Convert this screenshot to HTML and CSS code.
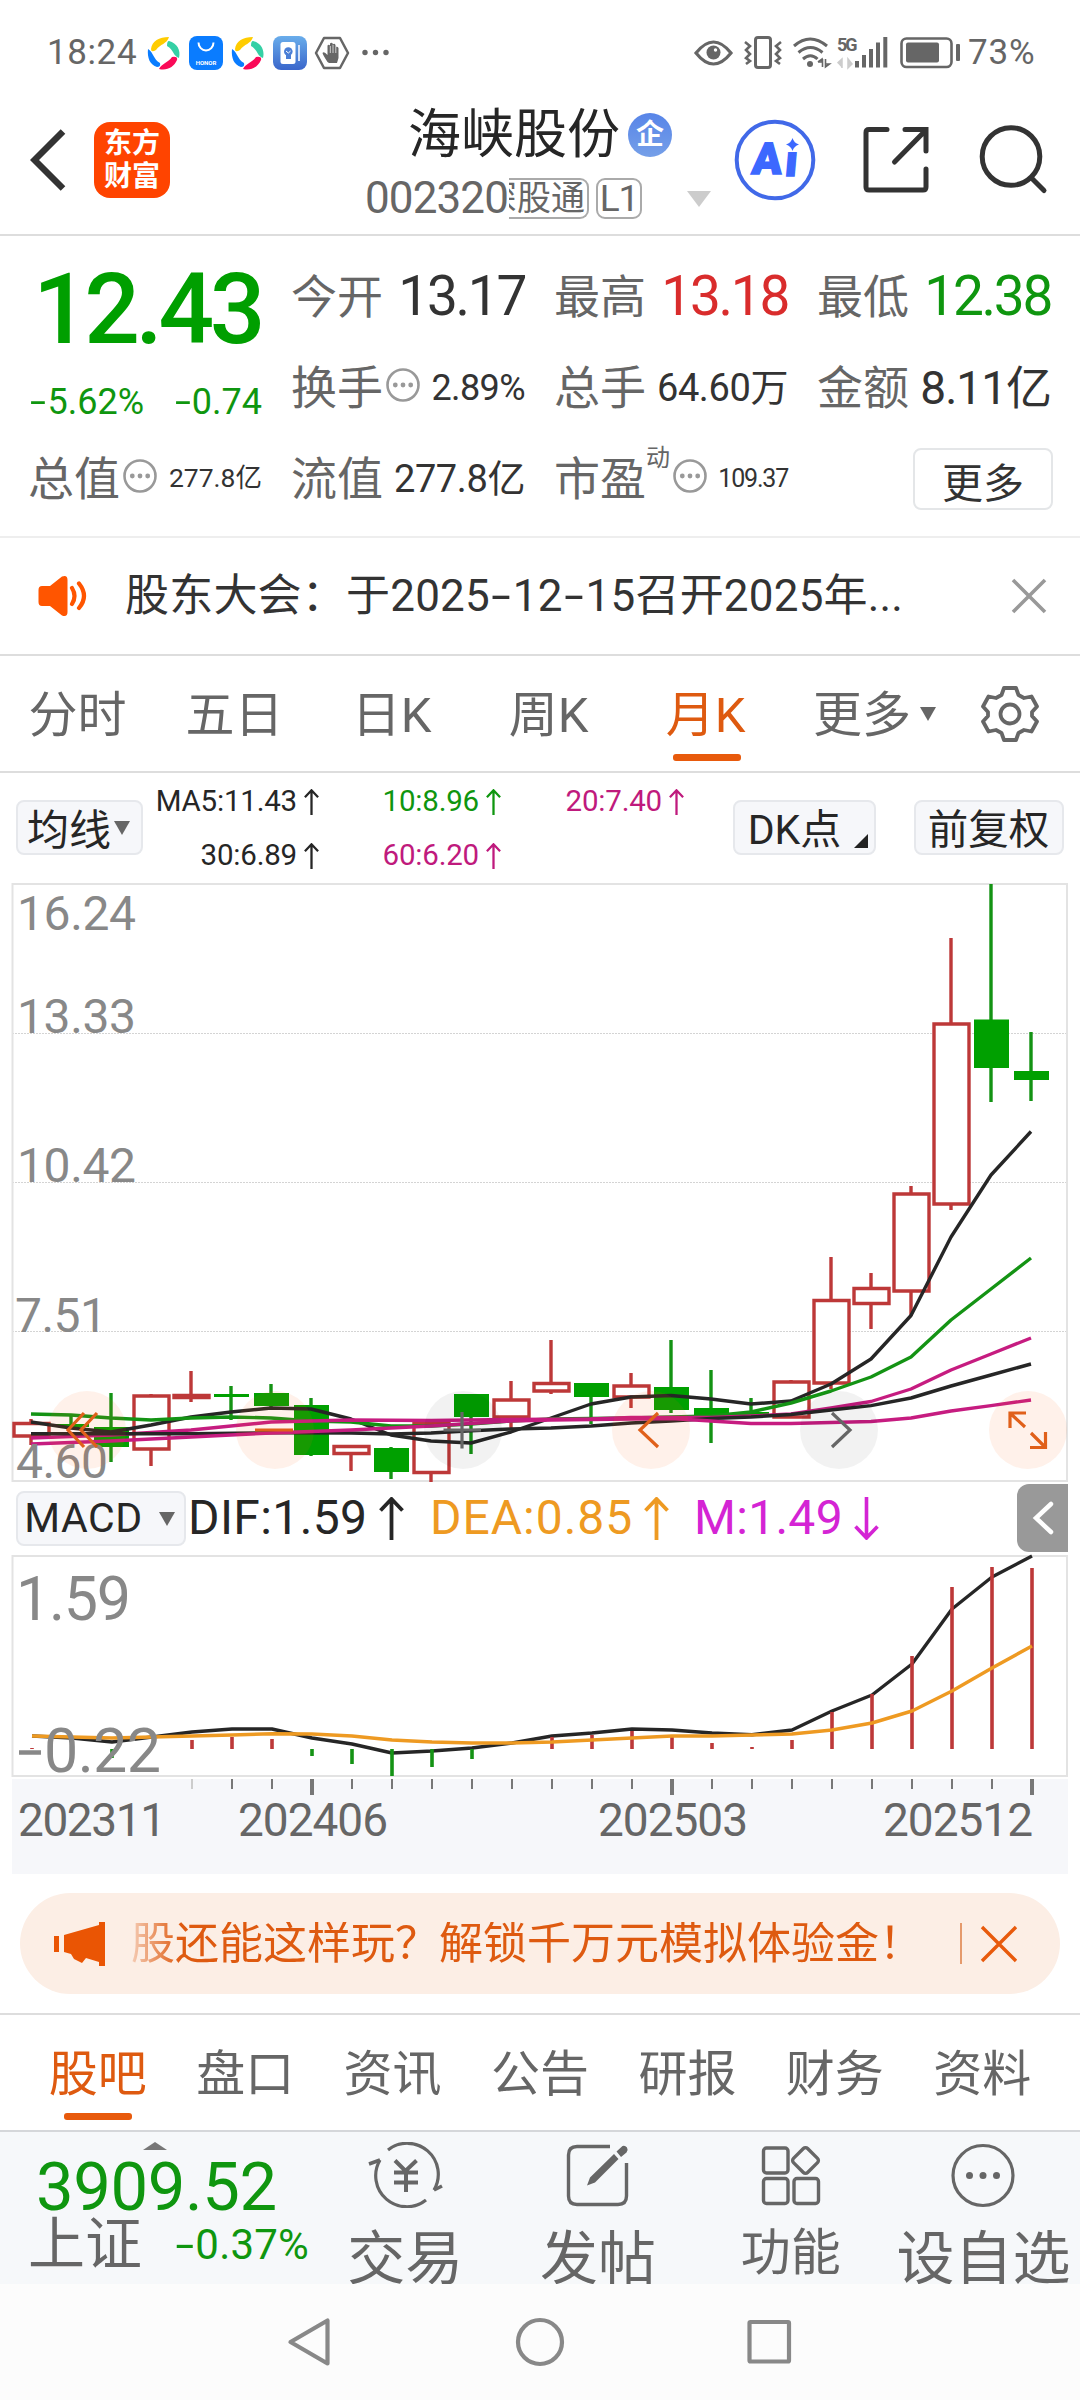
FILE: index.html
```html
<!DOCTYPE html>
<html lang="zh-CN">
<head>
    <meta charset="UTF-8">
    <meta name="viewport" content="width=device-width, initial-scale=1.0">
    <title>海峡股份 002320</title>
    <link rel="stylesheet" href="styles.css">
</head>
<body>
    <svg class="defs" width="0" height="0">
        <symbol id="arrow-up" viewBox="0 0 25 43"><path d="M12.5 43V3M1.5 13.5L12.5 2L23.5 13.5" fill="none" stroke="currentColor" stroke-width="3.8"/></symbol>
        <symbol id="arrow-down" viewBox="0 0 25 43"><path d="M12.5 0V40M1.5 29.5L12.5 41L23.5 29.5" fill="none" stroke="currentColor" stroke-width="3.6"/></symbol>
        <symbol id="more-dot" viewBox="0 0 34 34"><circle cx="17" cy="17" r="15.5" fill="none" stroke="#999" stroke-width="2.6"/><g fill="#999"><circle cx="9.3" cy="17" r="2.4"/><circle cx="17" cy="17" r="2.4"/><circle cx="24.7" cy="17" r="2.4"/></g></symbol>
        <symbol id="pinwheel" viewBox="0 0 34 34">
            <path d="M4 13C5 5 12 1 22 1C20 8 13 8 9 14Q4 17 4 13Z" fill="#fc0"/>
            <path d="M22 5C30 7 34 14 32 22C26 20 27 14 20 10Q20 5 22 5Z" fill="#35d0a5"/>
            <path d="M1 13C7 17 6 23 13 27Q14 31 10 31C3 29 0 22 1 13Z" fill="#0a7cff"/>
            <path d="M12 33C15 27 21 27 25 21Q31 20 30 24C27 31 20 35 12 33Z" fill="#fa0a58"/>
        </symbol>
    </svg>

    <div class="phone">
        <div class="status">
            <span class="clock">18:24</span>
            <svg class="status-left" width="250" height="36" viewBox="147 35 250 36">
                <use href="#pinwheel" x="147" y="36" width="34" height="34"/>
                <rect x="189" y="36" width="34" height="34" rx="8" fill="#0a7cff"/>
                <path d="M198.5 42.5A7.5 8 0 0 0 213.5 42.5" fill="none" stroke="#fff" stroke-width="2"/>
                <text class="honor" x="206" y="64.5" text-anchor="middle">HONOR</text>
                <use href="#pinwheel" x="231" y="36" width="34" height="34"/>
                <linearGradient id="tip" x2="0" y2="1"><stop stop-color="#69adeb"/><stop offset="1" stop-color="#3a66cb"/></linearGradient>
                <rect x="273" y="36" width="34" height="34" rx="8" fill="url(#tip)"/>
                <rect x="280.5" y="42" width="15" height="22" rx="2.5" fill="#fff"/>
                <path d="M299 45V61" stroke="#d5e2f8" stroke-width="2"/>
                <circle cx="288.3" cy="51.5" r="4.3" fill="#4a7ed6"/><path d="M286 55h5v4h-5z" fill="#4a7ed6"/><path d="M286 51l2.3 2 2.3-2" stroke="#fff" fill="none"/>
                <path d="M324 38H340L348 53L340 68H324L316 53Z" fill="none" stroke="#666" stroke-width="2.5" stroke-linejoin="round"/>
                <path d="M327.5 62C325 58 323 55 322.5 53Q324 51 327.5 55V45.5Q328.5 44 330 45.5V43.5Q331.5 42 332.7 43.5V44.5Q334.5 43 335.5 45V47Q337.5 46 338.5 48V58L337 63H329Z" fill="#666"/>
                <path d="M330.3 46V53M333 45V53M335.8 47V53" stroke="#fff" stroke-width=".7"/>
                <g fill="#666"><circle cx="365" cy="52.5" r="2.7"/><circle cx="375.5" cy="52.5" r="2.7"/><circle cx="386" cy="52.5" r="2.7"/></g>
            </svg>
            <svg class="status-right" width="270" height="36" viewBox="693 35 270 36">
                <path d="M696 53Q713.5 31 731 53Q713.5 75 696 53Z" fill="none" stroke="#666" stroke-width="3.2"/>
                <circle cx="713.5" cy="52.5" r="7" fill="#666"/><circle cx="715.5" cy="50" r="1.7" fill="#fff"/>
                <g fill="none" stroke="#666" stroke-width="3">
                    <rect x="755.5" y="37.5" width="15" height="30" rx="2.5"/>
                    <path d="M745 42l5 4-4 4 4 4-4 4 4 3-4 3M781 42l-5 4 4 4-4 4 4 4-4 3 4 3" stroke-width="2.6"/>
                    <path d="M794 46Q810 32 827 46M798.5 52.5Q810.5 42.5 822.5 52.5M803 59Q810.5 52.5 817.5 59"/>
                </g>
                <circle cx="810" cy="64" r="3" fill="#666"/>
                <path d="M818 62h4v-3l-4 3M822.5 59V67M825.5 59V67l4-3h-4" stroke="#666" fill="none" stroke-width="1.6"/>
                <text class="net" x="837" y="51">5G</text>
                <path d="M837.5 63l4.500-4v9M848 59v9l4-4z" fill="#ccc" stroke="#ccc" stroke-width="1.5"/>
                <path d="M857 61V67.5M864 55V67.5M871 49V67.5M878 42.5V67.5M885.3 37V67.5" stroke="#666" stroke-width="4"/>
                <rect x="901.5" y="38.5" width="50" height="28.5" rx="5" fill="none" stroke="#666" stroke-width="2.6"/>
                <rect x="906" y="42.5" width="33" height="20" rx="2" fill="#666"/>
                <rect x="956" y="44" width="4" height="17" rx="1" fill="#666"/>
            </svg>
            <span class="battery">73%</span>
        </div>

        <header class="header">
            <svg class="back" width="36" height="66" viewBox="30 127 36 66"><path d="M63 131.5L34.5 160L63 188.5" fill="none" stroke="#333" stroke-width="6.5"/></svg>
            <div class="logo">东方<br>财富</div>
            <div class="stock">
                <div class="stock-name">海峡股份<span class="badge">企</span></div>
                <div class="stock-code">
                    <span class="code">002320</span>
                    <span class="tag tag-cut"><span>深股通</span></span>
                    <span class="tag">L1</span>
                    <i class="tri-gray"></i>
                </div>
            </div>
            <svg class="header-icons" width="320" height="84" viewBox="733 118 320 84">
                <circle cx="775" cy="160" r="38.3" fill="none" stroke="#4169e8" stroke-width="4"/>
                <text class="ai" transform="translate(751 174) skewX(-5)">A</text>
                <text class="ai" transform="translate(784 176) skewX(-5)">ı</text>
                <path d="M792.5 138Q794 143 799 144.5Q794 146 792.5 151Q791 146 786 144.5Q791 143 792.5 138Z" fill="#3c68ff"/>
                <g fill="none" stroke="#333" stroke-width="5" stroke-linecap="round">
                    <path d="M887 129.5H869Q866 129.5 866 132.5V187Q866 190 869 190H923Q926 190 926 187V169"/>
                    <path d="M905 129.5H926V151M894.5 162L925 131"/>
                    <circle cx="1011" cy="156.5" r="28.8"/>
                    <path d="M1031.5 178L1044 190.5"/>
                </g>
            </svg>
        </header>

        <section class="quote">
            <div class="price-box">
                <div class="price">12.43</div>
                <div class="change"><span><i class="dash">-</i>5.62%</span><span><i class="dash">-</i>0.74</span></div>
            </div>
            <div class="cell"><label>今开</label><b class="v1">13.17</b></div>
            <div class="cell"><label>最高</label><b class="v1 red">13.18</b></div>
            <div class="cell"><label>最低</label><b class="v1 green">12.38</b></div>
            <div class="cell"><label>换手</label><svg class="dot"><use href="#more-dot"/></svg><b class="v4">2.89%</b></div>
            <div class="cell"><label>总手</label><b class="v3">64.60万</b></div>
            <div class="cell"><label>金额</label><b class="v2">8.11亿</b></div>
            <div class="cell"><label>总值</label><svg class="dot"><use href="#more-dot"/></svg><b class="v5">277.8亿</b></div>
            <div class="cell"><label>流值</label><b class="v3">277.8亿</b></div>
            <div class="cell"><label>市盈</label><sup>动</sup><svg class="dot"><use href="#more-dot"/></svg><b class="v6">109.37</b></div>
            <div class="cell"><button class="more">更多</button></div>
        </section>

        <section class="notice">
            <svg width="52" height="44" viewBox="37 574 52 44">
                <path d="M42 586H50L62 576.5Q67.5 574.5 67.5 580V612Q67.5 617.5 62 615.5L50 606H42Q38.5 606 38.5 602V590Q38.5 586 42 586Z" fill="#ff5500"/>
                <path d="M72 588Q77 596 72 604M79 583.5Q89 596 79 608" fill="none" stroke="#ff5500" stroke-width="4.2" stroke-linecap="round"/>
            </svg>
            <p>股东大会：于2025<i class="dash">-</i>12<i class="dash">-</i>15召开2025年...</p>
            <svg width="36" height="36" viewBox="0 0 36 36"><path d="M2 2L34 34M34 2L2 34" stroke="#999" stroke-width="3.6"/></svg>
        </section>

        <nav class="periods">
            <a>分时</a>
            <a>五日</a>
            <a>日K</a>
            <a>周K</a>
            <a class="active">月K</a>
            <a class="period-more">更多<i class="tri"></i></a>
            <svg width="60" height="60" viewBox="-30 -30 60 60">
                <path d="M-6 -26H6L8.5 -19L14 -16L21.5 -17.5L27 -7.5L22 -2V2L27 7.5L21.5 17.5L14 16L8.5 19L6 26H-6L-8.5 19L-14 16L-21.5 17.5L-27 7.5L-22 2V-2L-27 -7.5L-21.5 -17.5L-14 -16L-8.5 -19Z" fill="none" stroke="#666" stroke-width="3.8" stroke-linejoin="round"/>
                <circle r="9.5" fill="none" stroke="#666" stroke-width="3.8"/>
            </svg>
        </nav>

        <section class="ma-row">
            <button class="chip chip-ma">均线<i class="tri"></i></button>
            <div class="ma-values">
                <span>MA5:11.43<svg><use href="#arrow-up"/></svg></span>
                <span class="green">10:8.96<svg><use href="#arrow-up"/></svg></span>
                <span class="pink">20:7.40<svg><use href="#arrow-up"/></svg></span>
                <span>30:6.89<svg><use href="#arrow-up"/></svg></span>
                <span class="pink">60:6.20<svg><use href="#arrow-up"/></svg></span>
            </div>
            <button class="chip chip-dk">DK点<i class="corner"></i></button>
            <button class="chip chip-adj">前复权</button>
        </section>

        <!-- 月K线 -->
        <svg class="chart" width="1080" height="602" viewBox="0 880 1080 602">
            <path class="grid" d="M12 1033.5H1067M12 1182.5H1067M12 1331.5H1067"/>
            <rect class="frame" x="12.5" y="884" width="1054.5" height="597"/>

            <path class="wick-up" d="M31 1419V1445M151 1394V1466M191 1371V1402M351 1446V1471M431 1423V1482M511 1381V1428M551 1340V1394M631 1373V1408M791 1380V1418M831 1257V1389M871 1273V1329M911 1186V1316M951 938V1210"/>
            <path class="body-up" d="M14 1423.5h35v12.5h-35zM134 1396h35v53h-35zM174 1395.5h35v2h-35zM334 1446.5h35v7h-35zM414 1423.5h35v49h-35zM494 1400h35v17h-35zM534 1383.5h35v7.5h-35zM614 1386h35v11h-35zM774 1382h35v35h-35zM814 1300.5h35v82.5h-35zM854 1288.5h35v15h-35zM894 1194h35v97h-35zM934 1024h35v180h-35z"/>
            <path class="wick-down" d="M71 1414V1426M111 1393V1462M231 1386V1420M271 1384V1407M311 1398V1456M391 1447V1479M471 1394V1454M591 1383V1424M671 1340V1413M711 1370V1443M751 1398V1414M991 884V1102M1031 1032V1101"/>
            <path class="body-down" d="M54 1424h35v3h-35zM94 1427h35v20h-35zM214 1394h35v3h-35zM254 1393h35v13h-35zM294 1405h35v50h-35zM374 1448h35v24h-35zM454 1394h35v23h-35zM574 1383h35v14h-35zM654 1387h35v23h-35zM694 1408h35v7h-35zM734 1412h35v3h-35zM974 1019.5h35v48.5h-35zM1014 1071h35v9h-35z"/>

            <g class="ma-lines">
                <polyline class="l-black" points="31,1422 71,1428 111,1432 151,1425 191,1417 231,1412 271,1408 311,1409 351,1419 391,1435 431,1441 471,1443 511,1432 551,1418 591,1404 631,1397 671,1395.5 711,1399 751,1404 791,1401 831,1384 871,1359 911,1315.5 951,1237 991,1175 1031,1131.5"/>
                <polyline class="l-green" points="31,1414 71,1415 111,1418 151,1420 191,1418 231,1417 271,1418 311,1421 351,1422 391,1426 431,1426 471,1424 511,1421 551,1419 631,1418 711,1416 751,1412 791,1403 831,1391 871,1377 911,1357 951,1320 991,1289 1031,1258"/>
                <polyline class="l-pink" points="31,1438 111,1435 191,1430 271,1422 351,1420 431,1420.5 511,1419.5 591,1419 631,1417.5 711,1417.5 751,1416 791,1414 831,1408 871,1401.5 911,1389 951,1370 991,1354 1031,1338"/>
                <polyline class="l-black" points="31,1433.7 191,1433.7 271,1432.7 351,1433 391,1434 431,1433 471,1430.7 511,1429 551,1428 591,1426 631,1423 671,1421 711,1418.5 751,1417 791,1414.5 831,1410 871,1405.6 911,1398 951,1386 991,1375 1031,1364"/>
                <polyline class="l-pink" points="31,1444 111,1441 191,1437 271,1433 351,1430 431,1426 511,1421 551,1420 671,1418.5 711,1421 751,1423.5 791,1423.5 831,1422.5 871,1421.5 911,1418 951,1411 991,1405.6 1031,1400"/>
            </g>

            <g class="label-k">
                <text x="17" y="930" textLength="119">16.24</text>
                <text x="17" y="1033" textLength="119">13.33</text>
                <text x="17" y="1182" textLength="119">10.42</text>
                <text x="15" y="1332" textLength="92">7.51</text>
                <text x="16" y="1478" textLength="92">4.60</text>
            </g>

            <g class="circle-orange"><circle cx="87" cy="1430" r="39"/><circle cx="275" cy="1430" r="39"/><circle cx="651" cy="1430" r="39"/><circle cx="1028" cy="1430" r="39"/></g>
            <g class="circle-gray"><circle cx="463" cy="1430" r="39"/><circle cx="839" cy="1430" r="39"/></g>
            <path class="i-orange" d="M84 1413L68 1430L84 1447M97 1413L81 1430L97 1447M255 1430H293M658 1413L640 1430L658 1447M1010 1428V1413H1026M1010 1413L1025 1427M1030 1447.5H1045.5V1432M1031 1433L1045 1447"/>
            <path class="i-gray" d="M443.5 1430H481M462 1412V1448.5M832 1413L850 1430L832 1447"/>
        </svg>

        <section class="macd-row">
            <button class="chip chip-macd">MACD<i class="tri"></i></button>
            <span class="macd-val dif">DIF:1.59<svg><use href="#arrow-up"/></svg></span>
            <span class="macd-val dea">DEA:0.85<svg><use href="#arrow-up"/></svg></span>
            <span class="macd-val m">M:1.49<svg><use href="#arrow-down"/></svg></span>
            <div class="fold"><svg width="24" height="36" viewBox="0 0 24 36"><path d="M20 4L5 18L20 32" fill="none" stroke="#fff" stroke-width="4.5" stroke-linecap="round"/></svg></div>
        </section>

        <!-- MACD -->
        <svg class="chart" width="1080" height="320" viewBox="0 1554 1080 320">
            <rect class="axis-bg" x="12" y="1779" width="1056" height="95"/>
            <rect class="frame" x="12.5" y="1556" width="1054.5" height="220"/>
            <polyline class="l-black" points="32,1736 72,1738 112,1742 152,1737 192,1732 232,1729 272,1729 312,1738 352,1744 392,1753 432,1751 472,1748 512,1743 552,1736 592,1733 632,1729 672,1730 712,1733 752,1734.7 792,1730 832,1711 872,1695 912,1664 952,1609 992,1577 1032,1556"/>
            <path class="bar-up" d="M32 1748V1749M192 1740V1749M232 1737V1749M272 1739V1749M552 1737V1749M592 1735V1749M632 1731V1749M672 1737V1749M712 1743V1749M752 1747V1749M792 1740V1749M832 1712V1749M872 1694V1749M912 1656V1749M952 1587V1749M992 1567V1749M1032 1568V1749"/>
            <path class="bar-down" d="M112 1749V1758M312 1749V1756M352 1749V1764M392 1749V1776M432 1749V1767M472 1749V1759"/>
            <polyline class="l-orange" points="32,1736 112,1738 152,1737 192,1736 232,1735 272,1733.7 312,1734 352,1736 392,1740 432,1742 472,1743 512,1743 552,1742 592,1740 632,1738 672,1736 712,1736 752,1735 792,1734 832,1730 872,1723 912,1711 952,1691 992,1668 1032,1646"/>
            <g class="label-m">
                <text x="16" y="1620" textLength="115">1.59</text>
                <text x="44" y="1772" textLength="117">0.22</text>
                <path d="M19 1752.5H41"/>
            </g>
            <path class="tick tick-faint" d="M192 1779V1789"/>
            <path class="tick" d="M232 1779V1789M272 1779V1789M352 1779V1789M392 1779V1789M432 1779V1789M472 1779V1789M512 1779V1789M552 1779V1789M592 1779V1789M632 1779V1789M712 1779V1789M752 1779V1789M792 1779V1789M832 1779V1789M872 1779V1789M912 1779V1789M952 1779V1789M992 1779V1789"/>
            <path class="tick tick-big" d="M312 1779V1795M672 1779V1795M1032 1779V1795"/>
            <g class="label-d">
                <text x="18" y="1836" textLength="148">202311</text>
                <text x="238" y="1836" textLength="150">202406</text>
                <text x="598" y="1836" textLength="150">202503</text>
                <text x="883" y="1836" textLength="150">202512</text>
            </g>
        </svg>

        <section class="promo">
            <svg width="52" height="46" viewBox="54 1921 52 46"><path d="M54 1936H59V1952H54ZM64 1935L99 1925V1922H105V1966H99V1962L86 1958L82 1963L74 1959L71 1954L64 1952Z" fill="#ea5504"/></svg>
            <p>股还能这样玩？解锁千万元模拟体验金！</p>
            <i class="divider"></i>
            <svg width="38" height="38" viewBox="0 0 38 38"><path d="M2 2L36 36M36 2L2 36" stroke="#e85a0c" stroke-width="3.4"/></svg>
        </section>

        <nav class="tabs">
            <a class="active">股吧</a>
            <a>盘口</a>
            <a>资讯</a>
            <a>公告</a>
            <a>研报</a>
            <a>财务</a>
            <a>资料</a>
        </nav>

        <footer class="bottom">
            <div class="index">
                <i class="tri-up"></i>
                <div class="index-value">3909.52</div>
                <div class="index-row"><span>上证</span><b><i class="dash">-</i>0.37%</b></div>
            </div>
            <div class="action">
                <svg width="76" height="66" viewBox="367 2142 76 66">
                    <g fill="none" stroke="#666" stroke-width="3.2">
                        <path d="M388 2150A31 31 0 0 1 434 2190M426 2200A31 31 0 0 1 380 2160"/>
                        <path d="M369 2164L380 2160M434 2190L442 2186" stroke-width="3.6"/>
                        <path d="M395 2160.5L405.5 2171L416.5 2160.5M394 2172.5H418M394 2182.5H418M406 2171V2192" stroke-width="4"/>
                    </g>
                </svg>
                <span>交易</span>
            </div>
            <div class="action">
                <svg width="64" height="66" viewBox="567 2142 64 66">
                    <path d="M611 2146.5H578Q569.5 2146.5 569.5 2155V2196Q569.5 2204.5 578 2204.5H619Q627.5 2204.5 627.5 2196V2163" fill="none" stroke="#666" stroke-width="3.4"/>
                    <path d="M588 2185.5L591 2177.5L615 2154L619.5 2159L596 2182.5ZM617.5 2151.5L623.5 2146Q626 2145 628 2147.5Q629.5 2150 627.5 2152.5L622 2157Z" fill="#666"/>
                </svg>
                <span>发帖</span>
            </div>
            <div class="action action-small">
                <svg width="62" height="66" viewBox="760 2142 62 66">
                    <g fill="none" stroke="#666" stroke-width="3.4">
                        <rect x="763.5" y="2148" width="24.5" height="25" rx="3"/>
                        <rect x="763.5" y="2178.5" width="24.5" height="25" rx="3"/>
                        <rect x="794" y="2178.5" width="24.5" height="25" rx="3"/>
                        <rect x="795.5" y="2150.5" width="20" height="20" rx="3" transform="rotate(45 805.5 2160.5)"/>
                    </g>
                </svg>
                <span>功能</span>
            </div>
            <div class="action">
                <svg width="66" height="66" viewBox="950 2142 66 66">
                    <circle cx="983" cy="2175.5" r="30" fill="none" stroke="#666" stroke-width="3.2"/>
                    <g fill="#666"><circle cx="969.5" cy="2175.5" r="3.5"/><circle cx="983" cy="2175.5" r="3.5"/><circle cx="996.5" cy="2175.5" r="3.5"/></g>
                </svg>
                <span>设自选</span>
            </div>
        </footer>

        <div class="sysnav">
            <svg width="1080" height="116" viewBox="0 2284 1080 116">
                <g fill="none" stroke="#888" stroke-width="4.2" stroke-linejoin="round">
                    <path d="M327.5 2320.5V2363.5L290.5 2342Z"/>
                    <circle cx="540" cy="2342" r="22"/>
                    <rect x="749.5" y="2322" width="39.5" height="39.5" rx="1"/>
                </g>
            </svg>
        </div>
    </div>
</body>
</html>
```
FILE: styles.css
```css
* {
    box-sizing: border-box;
}

body {
    margin: 0;
    background: #fff;
    font-family: Roboto, "Noto Sans CJK SC", sans-serif;
    color: #333;
}

i, b {
    font-style: normal;
    font-weight: normal;
}

p {
    margin: 0;
}

button {
    font-family: inherit;
    padding: 0;
    color: inherit;
}

svg {
    display: block;
    flex: none;
}

.defs {
    position: absolute;
}

.phone {
    width: 1080px;
    height: 2400px;
    overflow: hidden;
    line-height: 1;
    white-space: nowrap;
}

.red { color: #d92c2c; }
.green { color: #0f960f; }
.pink { color: #bf1a7d; }

.dash {
    display: inline-block;
    transform: scaleX(1.6);
    margin: 0 .12em;
}

.tri {
    border: 8.5px solid transparent;
    border-top: 14px solid #666;
    border-bottom: 0;
}

/* 状态栏 */
.status {
    height: 105px;
    display: flex;
    align-items: center;
    font-size: 35px;
    color: #666;
    padding: 0 40px 0 47px;
}

.clock {
    width: 100px;
    letter-spacing: .6px;
}

.status-left {
    margin-right: 296px;
}

.battery {
    margin-left: 5px;
    letter-spacing: .8px;
}

.honor {
    font-size: 6px;
    font-weight: 700;
    fill: #fff;
}

.net {
    font-size: 18px;
    font-weight: 700;
    fill: #666;
    letter-spacing: -2px;
}

/* 顶部 */
.header {
    height: 131px;
    display: flex;
    border-bottom: 2px solid #ddd;
    padding-left: 30px;
}

.back {
    margin-top: 22px;
}

.logo {
    width: 76px;
    height: 76px;
    margin: 17px 0 0 28px;
    border-radius: 16px;
    background: #ff4400;
    color: #fff;
    font-size: 28px;
    font-weight: 700;
    line-height: 33px;
    text-align: center;
    padding-top: 5px;
}

.stock {
    width: 563px;
    padding-left: 195px;
}

.stock-name {
    height: 60px;
    display: flex;
    align-items: center;
    font-size: 53px;
    color: #262626;
    margin-left: 43px;
}

.badge {
    width: 44px;
    height: 44px;
    margin: 0 0 0 8px;
    border-radius: 50%;
    background: linear-gradient(#5885e8, #759fe8);
    color: #fff;
    font-size: 28px;
    font-weight: 700;
    line-height: 44px;
    text-align: center;
}

.stock-code {
    display: flex;
    align-items: center;
    height: 42px;
    margin-top: 12px;
    color: #666;
}

.code {
    width: 144px;
    font-size: 44px;
    letter-spacing: -.9px;
}

.tag {
    height: 41px;
    width: 46px;
    border: 2px solid #aaa;
    border-radius: 9px;
    font-size: 37px;
    line-height: 37px;
    text-align: center;
    letter-spacing: -1px;
}

.tag-cut {
    display: flex;
    justify-content: flex-end;
    width: 80px;
    margin-right: 7px;
    overflow: hidden;
    border-left: 0;
    border-radius: 0 9px 9px 0;
    font-size: 34px;
    padding-right: 2px;
    letter-spacing: 0;
}

.tri-gray {
    margin: 1px 0 0 45px;
    border: 12px solid transparent;
    border-top: 16px solid #ccc;
    border-bottom: 0;
}

.header-icons {
    margin-top: 13px;
}

.ai {
    font-size: 44px;
    font-weight: 900;
    fill: #3c68ff;
    stroke: #3c68ff;
    stroke-width: 1.5;
}

/* 行情 */
.quote {
    height: 302px;
    display: grid;
    grid-template-columns: repeat(4, 233px);
    grid-auto-rows: 91px;
    column-gap: 30px;
    padding: 15px 29px 0;
    border-bottom: 2px solid #eee;
}

.price-box {
    grid-row: span 2;
    color: #009f00;
}

.price {
    height: 117px;
    padding-right: 1px;
    font-size: 98px;
    font-weight: 500;
    line-height: 118px;
    letter-spacing: -4.4px;
    text-align: right;
}

.change {
    display: flex;
    justify-content: space-between;
    font-size: 36px;
    line-height: 68px;
    color: #0f960f;
}

.cell {
    display: flex;
    align-items: center;
}

.cell label {
    margin-left: -1px;
    font-size: 46px;
    color: #666;
}

.cell b {
    margin-left: auto;
}

.cell sup {
    font-size: 24px;
    color: #666;
    margin-bottom: 42px;
}

.dot {
    width: 34px;
    height: 34px;
    margin: -6px 0 0 3px;
}

.v1 { font-size: 55px; letter-spacing: -2.3px; }
.v2 { font-size: 46px; letter-spacing: -1px; }
.v3 { font-size: 38px; letter-spacing: -.4px; }
.v4 { font-size: 36px; letter-spacing: -.6px; }
.v5 { font-size: 26.5px; }
.v6 { font-size: 25px; letter-spacing: -1.2px; }

.more {
    width: 140px;
    height: 62px;
    margin: 0 -2px 0 auto;
    padding-bottom: 6px;
    background: #fff;
    border: 2px solid #e4e6e8;
    border-radius: 8px;
    font-size: 41px;
}

/* 公告 */
.notice {
    height: 118px;
    display: flex;
    align-items: center;
    padding-left: 37px;
    border-bottom: 2px solid #ddd;
}

.notice p {
    width: 922px;
    padding-left: 36px;
    font-size: 44px;
    letter-spacing: .2px;
}

/* 周期 */
.periods {
    height: 117px;
    display: flex;
    align-items: center;
    border-bottom: 2px solid #ddd;
    font-size: 49px;
    line-height: 53px;
    color: #666;
}

.periods a {
    position: relative;
    width: 157px;
    padding: 4px 2px 0 0;
    text-align: center;
}

.periods .period-more {
    display: flex;
    align-items: center;
    width: 167px;
    margin-left: 28px;
}

.period-more .tri {
    margin: -4px 0 0 9px;
}

.periods .active, .tabs .active {
    color: #de5a10;
}

.active::after {
    content: "";
    position: absolute;
    left: 50%;
    bottom: -19px;
    width: 68px;
    height: 7px;
    margin-left: -34px;
    border-radius: 3px;
    background: #e85a0c;
}

/* 均线 */
.ma-row {
    height: 107px;
    display: flex;
    align-items: center;
    padding-top: 2px;
    color: #262626;
}

.chip {
    height: 55px;
    display: flex;
    align-items: center;
    justify-content: center;
    border: 2px solid #e6e8ec;
    border-radius: 8px;
    background: #f6f7fa;
    font-size: 42px;
}

.chip-ma {
    width: 127px;
    margin-left: 16px;
    padding: 0 2px 3px 0;
}

.chip-ma .tri {
    margin: 3px 0 0 3px;
}

.ma-values {
    height: 107px;
    display: grid;
    grid-template-columns: 176px 182px 183px;
    grid-template-rows: 54px 54px;
    padding-top: 1px;
    font-size: 29.5px;
}

.ma-values span {
    display: flex;
    align-items: center;
    justify-content: flex-end;
    letter-spacing: -.2px;
}

.ma-values svg {
    width: 15px;
    height: 26px;
    margin-left: 7px;
}

.chip-dk {
    position: relative;
    width: 143px;
    margin-left: 49px;
    padding: 0 20px 4px 0;
    font-size: 41px;
}

.corner {
    position: absolute;
    right: 6px;
    bottom: 5px;
    border-left: 14px solid transparent;
    border-bottom: 14px solid #222;
}

.chip-adj {
    width: 150px;
    margin-left: 38px;
    padding: 0 1px 3px 0;
    font-size: 40.5px;
}

/* 图表 */
.frame {
    fill: none;
    stroke: #e3e3e3;
    stroke-width: 2;
}

.grid {
    stroke: #d4d4d4;
    stroke-dasharray: 2 1;
    fill: none;
}

.wick-up, .body-up {
    stroke: #bd3838;
    stroke-width: 3.4;
    fill: #fff;
}

.wick-down {
    stroke: #149314;
    stroke-width: 3.4;
}

.body-down {
    fill: #00a000;
}

.l-black, .l-green, .l-pink, .l-orange {
    fill: none;
    stroke-width: 3.4;
    stroke-linejoin: round;
}

.l-black { stroke: #262626; }
.l-green { stroke: #149314; }
.l-pink { stroke: #c61c80; }
.l-orange { stroke: #ee9a22; }

.label-k, .label-m {
    fill: #888;
    font-size: 48px;
}

.label-m {
    font-size: 61px;
    stroke-width: 4.5;
}

.label-m text {
    stroke: none;
}

.label-m path {
    stroke: #888;
}

.label-d {
    fill: #666;
    font-size: 46px;
}

.circle-orange { fill: rgba(255, 100, 20, .09); }
.circle-gray { fill: rgba(0, 0, 0, .05); }

.i-orange, .i-gray {
    fill: none;
    stroke: #e0601a;
    stroke-width: 3.2;
}

.i-gray {
    stroke: #666;
}

.bar-up, .bar-down {
    stroke: #bd3838;
    stroke-width: 3.6;
}

.bar-down {
    stroke: #149314;
}

.axis-bg {
    fill: #f6f7fa;
}

.tick {
    stroke: #777;
    stroke-width: 2;
}

.tick-faint {
    stroke: #ccc;
}

.tick-big {
    stroke-width: 4;
}

.macd-row {
    height: 72px;
    display: flex;
    align-items: center;
    padding: 0 12px 0 16px;
    font-size: 48px;
}

.chip-macd {
    width: 170px;
    padding-right: 3px;
    font-size: 41px;
    letter-spacing: .5px;
    color: #262626;
}

.chip-macd .tri {
    margin: 2px 0 0 16px;
}

.macd-val {
    display: flex;
    align-items: center;
}

.macd-val svg {
    width: 25px;
    height: 43px;
    margin-left: 11px;
}

.dif {
    width: 242px;
    margin-left: 2px;
    letter-spacing: .4px;
    color: #262626;
}

.dea {
    width: 264px;
    letter-spacing: 1px;
    color: #ee9a22;
}

.m {
    letter-spacing: .3px;
    color: #d424d4;
}

.fold {
    width: 51px;
    height: 68px;
    margin-left: auto;
    display: flex;
    align-items: center;
    justify-content: center;
    border-radius: 12px 0 0 12px;
    background: #999;
}

/* 推广条 */
.promo {
    height: 101px;
    display: flex;
    align-items: center;
    margin: 19px 20px;
    padding-left: 34px;
    border-radius: 51px;
    background: #fceee5;
    color: #de5a10;
    font-size: 44px;
}

.promo p {
    width: 854px;
    padding-left: 25px;
    -webkit-mask-image: linear-gradient(90deg, transparent 10px, #000 75px);
    mask-image: linear-gradient(90deg, transparent 10px, #000 75px);
}

.divider {
    width: 2px;
    height: 41px;
    margin-right: 18px;
    background: #e59a6c;
}

.tabs {
    height: 117px;
    display: flex;
    align-items: center;
    padding: 0 24px;
    border-top: 2px solid #ddd;
    font-size: 49px;
    line-height: 52px;
    color: #666;
}

.tabs a {
    position: relative;
    flex: 1;
    padding-top: 5px;
    text-align: center;
}

/* 底部 */
.bottom {
    height: 154px;
    display: flex;
    border-top: 2px solid #d5d7da;
    background: #f6f8fa;
    overflow: hidden;
    color: #666;
}

.index {
    width: 309px;
    padding: 10px 0 0 28px;
}

.tri-up {
    display: block;
    width: 0;
    margin-left: 115px;
    border: 12px solid transparent;
    border-bottom: 8px solid #777;
    border-top: 0;
}

.index-value {
    margin: 4px 0 0 8px;
    font-size: 67px;
    letter-spacing: -.4px;
    color: #0f960f;
}

.index-row {
    display: flex;
    align-items: center;
    justify-content: space-between;
    margin-top: -5px;
    font-size: 57px;
}

.index-row b {
    font-size: 42px;
    letter-spacing: .2px;
    color: #0f960f;
}

.action {
    width: 192.7px;
    display: flex;
    flex-direction: column;
    align-items: center;
    padding-top: 10px;
    font-size: 58px;
}

.action span {
    margin-top: 22px;
}

.action-small {
    font-size: 50px;
}

.action-small span {
    margin-top: 20px;
}

.sysnav {
    height: 116px;
    background: #fcfcfc;
}
```
